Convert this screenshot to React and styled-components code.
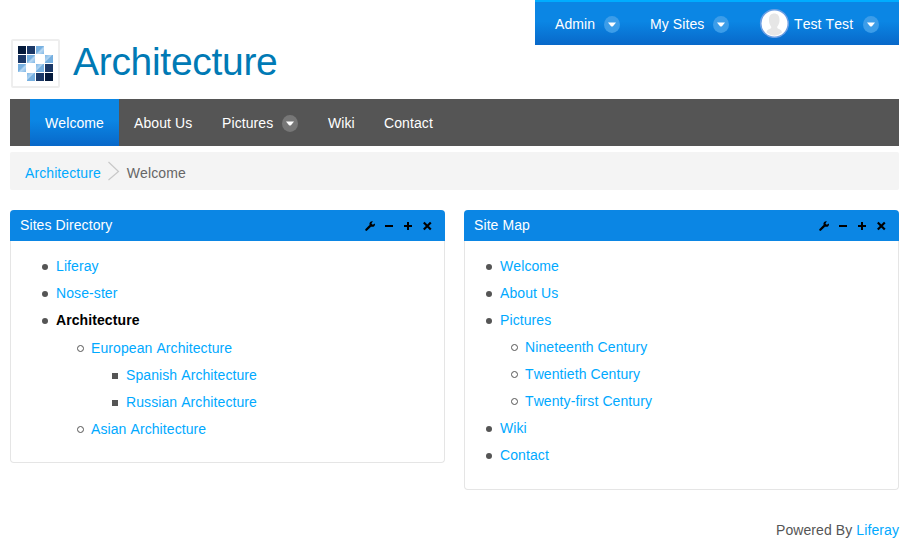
import React from "react";
import styled, { createGlobalStyle } from "styled-components";

const Global = createGlobalStyle`
  * { box-sizing: border-box; }
  body {
    margin: 0;
    background: #fff;
    color: #555;
    font: 14px/20px "Liberation Sans", Arial, sans-serif;
    font-kerning: none;
    letter-spacing: 0.09px;
  }
  ul { list-style: none; margin: 0; padding: 0; }
`;

const Page = styled.div`
  width: 909px;
  height: 546px;
  padding: 0 10px;
  overflow: hidden;
`;

const Banner = styled.header`
  display: flex;
  justify-content: space-between;
  height: 99px;
`;

const Brand = styled.div`
  display: flex;
  padding: 39px 0 0 1px;
`;

const LogoFrame = styled.div`
  width: 49px;
  height: 49px;
  border: 2px solid #eee;
  border-radius: 2px;
  padding: 5px;
  svg { display: block; }
`;

const SiteName = styled.h1`
  margin: 0 0 0 13px;
  font-size: 39px;
  font-weight: 400;
  line-height: 46px;
  letter-spacing: -0.3px;
  color: #007ab5;
  white-space: nowrap;
`;

const Dockbar = styled.nav`
  display: flex;
  align-items: center;
  width: 364px;
  height: 45px;
  padding: 1px 20px 0;
  border-top: 2px solid #00adff;
  background: linear-gradient(#0b86e4 0%, #0b86e4 45%, #0868c9 100%);
`;

const DockItem = styled.div`
  display: flex;
  align-items: center;
  color: #fff;
  margin-right: ${(p) => p.$gap || 0}px;
`;

const Label = styled.span`
  width: ${(p) => p.$w}px;
  white-space: nowrap;
`;

const Avatar = styled.span`
  width: 30px;
  height: 30px;
  margin: -2px 5px 0 0;
  svg { display: block; }
`;

const Dot = styled.span`
  display: flex;
  justify-content: center;
  align-items: center;
  width: 16px;
  height: 17px;
  margin-left: 9px;
  border-radius: 50%;
  background: ${(p) => (p.$dark ? "#777" : "#3c9de9")};
  svg { display: block; }
`;

const NavBar = styled.nav`
  display: flex;
  height: 47px;
  padding-left: 20px;
  background: #555;
`;

const NavItem = styled.a`
  display: flex;
  align-items: center;
  padding: 1px 15px 0;
  color: #fff;
  background: ${(p) => (p.$active ? "linear-gradient(#0b86e4 0%, #0b86e4 45%, #0868c9 100%)" : "none")};
`;

const Crumbs = styled.div`
  display: flex;
  align-items: center;
  height: 38px;
  margin-top: 6px;
  padding: 4px 15px 0;
  border-radius: 2px;
  background: #f4f4f4;
  color: #666;
`;

const Chevron = styled.svg`
  width: 12px;
  height: 20px;
  margin: -4px 7px 0;
`;

const Link = styled.a`
  color: #00a9ff;
  white-space: nowrap;
`;

const Columns = styled.main`
  display: grid;
  grid-template-columns: 435px 435px;
  column-gap: 19px;
  align-items: start;
  height: 300px;
  margin-top: 20px;
`;

const Card = styled.section`
  height: ${(p) => p.$h}px;
  border: 1px solid #e5e5e5;
  border-top: 0;
  border-radius: 4px;
`;

const CardHead = styled.header`
  display: flex;
  justify-content: space-between;
  align-items: center;
  height: 31px;
  margin: 0 -1px;
  padding: 0 12px 1px 10px;
  border-radius: 4px 4px 0 0;
  background: #0b86e4;
  color: #fff;
`;

const Tools = styled.svg`
  display: block;
  width: 70px;
  height: 14px;
  margin-top: 2px;
`;

const List = styled.ul`
  padding: 12px 0 0 ${(p) => p.$indent}px;
`;

const SubList = styled.ul`
  padding-left: ${(p) => p.$indent}px;
  padding-top: ${(p) => p.$top || 0}px;
`;

const Row = styled.div`
  display: flex;
  align-items: center;
  height: 27px;
  padding-bottom: 2px;
`;

const Bullet = styled.span`
  width: ${(p) => (p.$kind === "circle" ? 7 : 6)}px;
  height: ${(p) => (p.$kind === "circle" ? 7 : 6)}px;
  margin-right: ${(p) => (p.$kind === "circle" ? 7 : 8)}px;
  margin-top: ${(p) => (p.$kind === "circle" ? 1 : 2)}px;
  border: ${(p) => (p.$kind === "circle" ? "1px solid #555" : "0")};
  border-radius: ${(p) => (p.$kind === "square" ? 0 : "50%")};
  background: ${(p) => (p.$kind === "circle" ? "none" : "#555")};
`;

const Current = styled.strong`
  color: #000;
`;

const Footer = styled.footer`
  display: flex;
  justify-content: flex-end;
  gap: 4px;
  margin-top: 10px;
`;

const LOGO = ["DNL.", "NL.R", "L.RN", ".RND"];

function Logo() {
  const fill = { D: "#04193a", N: "#1b3867", L: "url(#tileLow)", R: "url(#tileHigh)" };
  return (
    <LogoFrame>
      <svg width="35" height="35">
        <defs>
          <linearGradient id="tileLow" x1="0" y1="0" x2="1" y2="1">
            <stop offset="0.45" stopColor="#77b0e0" />
            <stop offset="0.6" stopColor="#b9d9f4" />
            <stop offset="1" stopColor="#7fb6e4" />
          </linearGradient>
          <linearGradient id="tileHigh" x1="0" y1="0" x2="1" y2="1">
            <stop offset="0" stopColor="#7fb6e4" />
            <stop offset="0.4" stopColor="#b0d4f2" />
            <stop offset="0.5" stopColor="#77b0e0" />
          </linearGradient>
        </defs>
        {LOGO.flatMap((row, y) =>
          [...row].map((c, x) =>
            c === "." ? null : <rect key={`${x}${y}`} x={x * 9} y={y * 9} width="8" height="8" fill={fill[c]} />
          )
        )}
      </svg>
    </LogoFrame>
  );
}

const Caret = ({ dark }) => (
  <Dot $dark={dark}>
    <svg width="8" height="5"><path d="M0 0.5H8L5 4.2Q4 5 3 4.2Z" fill="#fff" /></svg>
  </Dot>
);

const CardTools = () => (
  <Tools viewBox="0 0 70 14">
    <path d="M3.3 10.8L7 7.1" stroke="#000" strokeWidth="2.2" strokeLinecap="round" />
    <path d="M11.9 4.4L9.8 5.8L8.4 4.6L9.9 2.2C7.7 1.8 5.9 3.5 6.5 5.8L8.1 7.7C10.7 8.3 12.5 6.5 11.9 4.4Z" fill="#000" />
    <path d="M22 7H30M41 7H49M45 3V11" stroke="#000" strokeWidth="2" />
    <path d="M60.8 3.5L67.8 10.5M67.8 3.5L60.8 10.5" stroke="#000" strokeWidth="2.2" />
  </Tools>
);

const Item = ({ kind, children }) => (
  <Row>
    <Bullet $kind={kind} />
    {children}
  </Row>
);

export default function App() {
  return (
    <>
      <Global />
      <Page>
        <Banner>
          <Brand>
            <Logo />
            <SiteName>Architecture</SiteName>
          </Brand>
          <Dockbar>
            <DockItem $gap={30}><Label $w={40}>Admin</Label><Caret /></DockItem>
            <DockItem $gap={30}><Label $w={54}>My Sites</Label><Caret /></DockItem>
            <DockItem>
              <Avatar>
                <svg width="30" height="30">
                  <circle cx="15.5" cy="15.5" r="13.8" fill="#fff" stroke="#6b9fe4" strokeWidth="1.6" />
                  <path d="M7.5 24.5C8 20.5 12 21.5 12.3 19.5C12.4 18 10 17 10 12C10 7.5 12 5.5 15.2 5.5S20.5 7.5 20.5 12C20.5 17 18.1 18 18.2 19.5C18.5 21.5 22.5 20.5 23 24.5Q15.5 31 7.5 24.5Z" fill="#e6e6e6" />
                </svg>
              </Avatar>
              <Label $w={60}>Test Test</Label><Caret />
            </DockItem>
          </Dockbar>
        </Banner>
        <NavBar>
          <NavItem $active><Label $w={59}>Welcome</Label></NavItem>
          <NavItem><Label $w={58}>About Us</Label></NavItem>
          <NavItem><Label $w={51}>Pictures</Label><Caret dark /></NavItem>
          <NavItem><Label $w={26}>Wiki</Label></NavItem>
          <NavItem><Label $w={50}>Contact</Label></NavItem>
        </NavBar>
        <Crumbs>
          <Link>Architecture</Link>
          <Chevron viewBox="0 0 12 20"><path d="M0.5 1L10.5 10.5L0.5 19" fill="none" stroke="#c8c8c8" strokeWidth="1.2" /></Chevron>
          <span>Welcome</span>
        </Crumbs>
        <Columns>
          <Card $h={253}>
            <CardHead>Sites Directory<CardTools /></CardHead>
            <List $indent={31}>
              <li><Item><Link>Liferay</Link></Item></li>
              <li><Item><Link>Nose-ster</Link></Item></li>
              <li>
                <Item><Current>Architecture</Current></Item>
                <SubList $indent={35} $top={1}>
                  <li>
                    <Item kind="circle"><Link>European Architecture</Link></Item>
                    <SubList $indent={35}>
                      <li><Item kind="square"><Link>Spanish Architecture</Link></Item></li>
                      <li><Item kind="square"><Link>Russian Architecture</Link></Item></li>
                    </SubList>
                  </li>
                  <li><Item kind="circle"><Link>Asian Architecture</Link></Item></li>
                </SubList>
              </li>
            </List>
          </Card>
          <Card $h={280}>
            <CardHead>Site Map<CardTools /></CardHead>
            <List $indent={21}>
              <li><Item><Link>Welcome</Link></Item></li>
              <li><Item><Link>About Us</Link></Item></li>
              <li>
                <Item><Link>Pictures</Link></Item>
                <SubList $indent={25}>
                  <li><Item kind="circle"><Link>Nineteenth Century</Link></Item></li>
                  <li><Item kind="circle"><Link>Twentieth Century</Link></Item></li>
                  <li><Item kind="circle"><Link>Twenty-first Century</Link></Item></li>
                </SubList>
              </li>
              <li><Item><Link>Wiki</Link></Item></li>
              <li><Item><Link>Contact</Link></Item></li>
            </List>
          </Card>
        </Columns>
        <Footer><span>Powered By</span><Link>Liferay</Link></Footer>
      </Page>
    </>
  );
}
